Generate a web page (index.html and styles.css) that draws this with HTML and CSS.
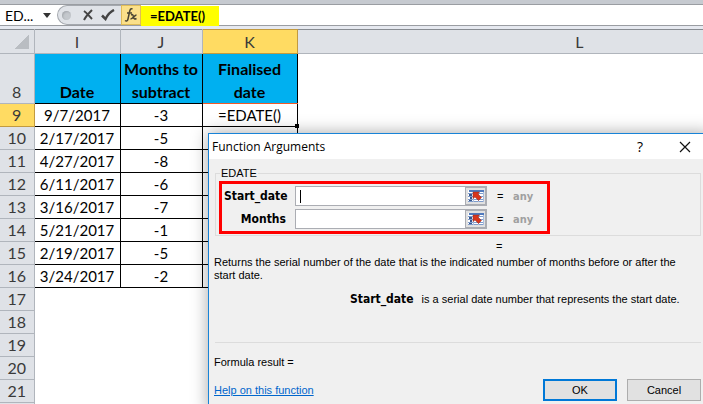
FILE: index.html
```html
<!DOCTYPE html>
<html lang="en">
<head>
    <meta charset="UTF-8">
    <meta name="viewport" content="width=device-width, initial-scale=1.0">
    <title>EDATE - Function Arguments</title>
    <link rel="stylesheet" href="styles.css">
</head>
<body>
    <div class="formula-bar">
        <div class="name-box">
            <span>ED...</span>
            <svg width="8" height="5" viewBox="0 0 8 5"><path d="M0 0h8L4 5z" fill="#333"/></svg>
        </div>
        <div class="tools">
            <span class="knob"></span>
            <button type="button" class="tool" aria-label="Cancel entry">
                <svg width="12" height="12" viewBox="0 0 12 12"><path d="M2 2c3 2 5 5 8 8M10 1C7 4 4 7 2 11" fill="none" stroke="#444" stroke-width="2"/></svg>
            </button>
            <button type="button" class="tool" aria-label="Enter">
                <svg width="14" height="12" viewBox="0 0 14 12"><path d="M1 6.500l3.500 3.500C6 7 9 3 13 1" fill="none" stroke="#444" stroke-width="2.500"/></svg>
            </button>
            <button type="button" class="tool fx" aria-label="Insert function">
                <svg width="14" height="16" viewBox="0 0 14 16" fill="none" stroke="#4a4433">
                    <path d="M8.500 2C6.500 1 6 2.500 5.500 5L4 12c-.4 2-1.500 2.500-3 1.500M3 6h5" stroke-width="1.500"/>
                    <path d="M7 8c2-1 2 0 2.500 2s1 2.500 3 1.500M12.500 8C10.500 8 9 12 6.500 12" stroke-width="1.500"/>
                </svg>
            </button>
        </div>
        <div class="formula"><span class="highlight">=EDATE()</span></div>
    </div>

    <table class="sheet">
        <colgroup>
            <col class="col-head">
            <col class="col-i">
            <col class="col-j">
            <col class="col-k">
            <col class="col-l">
        </colgroup>
        <thead>
            <tr>
                <th class="corner"></th>
                <th>I</th>
                <th>J</th>
                <th class="active">K</th>
                <th>L</th>
            </tr>
        </thead>
        <tbody>
            <tr class="titles">
                <th>8</th>
                <td>Date</td>
                <td>Months to subtract</td>
                <td class="above-edit">Finalised<br>date</td>
            </tr>
            <tr class="data"><th class="active">9</th><td>9/7/2017</td><td>-3</td><td class="editing">=EDATE()</td></tr>
            <tr class="data"><th>10</th><td>2/17/2017</td><td>-5</td><td></td></tr>
            <tr class="data"><th>11</th><td>4/27/2017</td><td>-8</td><td></td></tr>
            <tr class="data"><th>12</th><td>6/11/2017</td><td>-6</td><td></td></tr>
            <tr class="data"><th>13</th><td>3/16/2017</td><td>-7</td><td></td></tr>
            <tr class="data"><th>14</th><td>5/21/2017</td><td>-1</td><td></td></tr>
            <tr class="data"><th>15</th><td>2/19/2017</td><td>-5</td><td></td></tr>
            <tr class="data"><th>16</th><td>3/24/2017</td><td>-2</td><td></td></tr>
            <tr><th>17</th></tr>
            <tr><th>18</th></tr>
            <tr><th>19</th></tr>
            <tr><th>20</th></tr>
            <tr><th>21</th></tr>
            <tr><th></th></tr>
        </tbody>
    </table>

    <div class="dialog" role="dialog" aria-labelledby="dialogTitle">
        <div class="title-bar">
            <h2 id="dialogTitle">Function Arguments</h2>
            <button type="button" class="help-btn" aria-label="Help">?</button>
            <button type="button" class="close-btn" aria-label="Close">
                <svg width="12" height="12" viewBox="0 0 12 12"><path d="M1 1l10 10M11 1L1 11" stroke="#111" stroke-width="1.200"/></svg>
            </button>
        </div>
        <form class="dialog-body">
            <fieldset>
                <legend>EDATE</legend>
                <div class="args">
                    <div class="arg">
                        <label for="startDate">Start_date</label>
                        <div class="ref-box caret">
                            <input type="text" id="startDate" name="startDate">
                            <button type="button" aria-label="Select start date cell">
                                <svg width="16" height="14" viewBox="0 0 16 14"><use href="#refIcon"/></svg>
                            </button>
                        </div>
                        <span class="equals">=</span>
                        <span class="any">any</span>
                    </div>
                    <div class="arg">
                        <label for="months">Months</label>
                        <div class="ref-box">
                            <input type="text" id="months" name="months">
                            <button type="button" aria-label="Select months cell">
                                <svg width="16" height="14" viewBox="0 0 16 14"><use href="#refIcon"/></svg>
                            </button>
                        </div>
                        <span class="equals">=</span>
                        <span class="any">any</span>
                    </div>
                </div>
            </fieldset>
            <div class="result">=</div>
            <p class="description">Returns the serial number of the date that is the indicated number of months before or after the start date.</p>
            <p class="param"><b>Start_date</b><span>is a serial date number that represents the start date.</span></p>
            <hr>
            <p class="formula-result">Formula result =</p>
            <div class="footer">
                <a href="#">Help on this function</a>
                <button type="submit" class="btn default">OK</button>
                <button type="button" class="btn">Cancel</button>
            </div>
        </form>
    </div>

    <svg class="defs" width="0" height="0">
        <symbol id="refIcon" viewBox="0 0 16 14">
            <path d="M0 1h16v12H0z" fill="#ffffff"/>
            <path d="M1 1h15v2H1z" fill="#4f79bd"/>
            <path d="M0 4.500h16M0 7.500h16M0 10.500h16M0 12.500h16" stroke="#7f9ccb"/>
            <path d="M5.500 3v10M10.500 3v10M15.500 3v10" stroke="#a9bddd"/>
            <path d="M1 5h3v2H1zM2 8h2v2H2zM1 11h3v1H1z" fill="#35568f"/>
            <path d="M5 3h6.500L10 5l3.500 3.500-3 3L7 8 5 9.500z" fill="#d8341c" stroke="#8c2a20" stroke-width=".5"/>
        </symbol>
    </svg>
</body>
</html>
```
FILE: styles.css
```css
* {
    margin: 0;
    padding: 0;
    box-sizing: border-box;
}

body {
    position: relative;
    height: 100vh;
    overflow: hidden;
    background: #ffffff;
    color: #000000;
    font-family: Lato, 'Liberation Sans', sans-serif;
    font-size: 16px;
}

svg {
    display: block;
}

button {
    border: none;
    background: none;
    font: inherit;
    color: inherit;
}

.defs {
    position: absolute;
}

/* formula bar */

.formula-bar {
    display: flex;
    height: 29px;
    padding-top: 1px;
    border-top: 4px solid #c6cad0;
    border-bottom: 3px solid #e6e9f0;
    background: #ffffff;
    box-shadow: inset 0 -1px #9a9da2, inset 0 1px #9a9da2;
}

.name-box {
    display: flex;
    align-items: center;
    justify-content: space-between;
    width: 57px;
    height: 20px;
    padding: 0 6px 0 5px;
    font-size: 14px;
}

.tools {
    display: flex;
    align-items: center;
    width: 83px;
    height: 20px;
    border: 1px solid #a4a8ae;
    border-right: none;
    border-radius: 10px 0 0 10px;
    background: #e0e3e8;
}

.knob {
    width: 9px;
    height: 9px;
    margin: 0 7px 0 4px;
    border-radius: 50%;
    background: #c4c8cd;
    box-shadow: inset 1px 1px 2px #a5a9ae;
}

.tool {
    display: flex;
    align-items: center;
    justify-content: center;
    flex: 1;
    height: 18px;
}

.tools .fx {
    flex: none;
    width: 18px;
    margin-left: 4px;
    background: #fbe08a;
    box-shadow: 0 0 0 1px #e0bc58;
}

.formula {
    flex: 1;
}

.highlight {
    display: inline-block;
    height: 20px;
    margin-left: 1px;
    padding: 0 14px 0 9px;
    background: #ffff00;
    font-size: 13px;
    font-weight: bold;
    line-height: 20px;
}

/* worksheet */

.sheet {
    width: 862px;
    table-layout: fixed;
    border-collapse: collapse;
    line-height: 22px;
    text-align: center;
}

.col-head {
    width: 34px;
}

.col-i {
    width: 86px;
}

.col-j {
    width: 82px;
}

.col-k {
    width: 95px;
}

.sheet tr {
    height: 23px;
}

.sheet th {
    border: 1px solid #b0b5bc;
    border-left: none;
    background: #dfe2e7;
    color: #3a3a3a;
    font-weight: normal;
}

.sheet thead tr {
    height: 24px;
}

.sheet thead th {
    border-top-color: #878c92;
}

.sheet .corner {
    padding: 5px 5px 4px 14px;
    background: linear-gradient(135deg, transparent 50%, #b9bdc2 50%) content-box, #dfe2e7;
}

.sheet .active {
    border-color: #c29a40;
    background: #ffdb62;
}

.sheet tbody .titles {
    height: 50px;
}

.titles th,
.titles td {
    vertical-align: bottom;
}

.titles td {
    border: 1px solid #000000;
    background: #00b0f0;
    font-weight: bold;
    line-height: 23px;
}

.titles .above-edit {
    border-bottom-color: #f05a28;
}

.data td {
    border: 1px solid #000000;
    font-size: 15px;
}

.sheet .editing {
    position: relative;
    border-top-color: #f05a28;
}

.editing::after {
    content: '';
    position: absolute;
    right: -2px;
    bottom: -2px;
    width: 4px;
    height: 4px;
    background: #000000;
}

/* dialog */

.dialog {
    position: absolute;
    top: 133px;
    right: -8px;
    bottom: -8px;
    left: 208px;
    border: 1px solid #1883d7;
    background: #f0f0f0;
    box-shadow: 0 0 16px rgba(0, 0, 0, 0.35);
    font-family: 'Liberation Sans', Arial, sans-serif;
    font-size: 11px;
    line-height: 13px;
}

.title-bar {
    display: flex;
    align-items: center;
    height: 25px;
    padding: 0 19px 0 3px;
    background: #ffffff;
    font-family: 'Open Sans', 'Noto Sans', sans-serif;
}

.title-bar h2 {
    flex: 1;
    font-size: 12px;
    font-weight: normal;
}

.help-btn {
    width: 12px;
    margin-right: 33px;
    font-size: 14px;
}

.dialog-body {
    padding: 8px 9px 0 5px;
}

fieldset {
    margin-left: 1px;
    padding: 1px 3px;
    border: 1px solid #dcdcdc;
}

legend {
    margin-left: 1px;
    padding: 0 1px;
}

.args {
    display: flex;
    flex-direction: column;
    gap: 3px;
    width: 331px;
    padding: 2px;
    border: 3px solid #ff0000;
}

.arg {
    display: flex;
    align-items: center;
}

.arg label {
    width: 62px;
    margin-right: 9px;
    font-family: 'DejaVu Sans Condensed', 'DejaVu Sans', sans-serif;
    font-size: 12px;
    font-weight: bold;
    text-align: right;
}

.ref-box {
    position: relative;
    display: flex;
    width: 192px;
    height: 20px;
    border: 1px solid #abadb3;
    background: #ffffff;
}

.ref-box input {
    flex: 1;
    min-width: 0;
    padding: 0 4px;
    border: none;
    outline: none;
    background: none;
    font: inherit;
}

.ref-box button {
    display: flex;
    align-items: center;
    justify-content: center;
    width: 21px;
    border: 1px solid #abadb3;
    background: #e1e1e1;
}

.caret::before {
    content: '';
    position: absolute;
    top: 3px;
    left: 4px;
    width: 1px;
    height: 13px;
    background: #000000;
}

.equals {
    width: 7px;
    margin: 0 9px 0 10px;
}

.any {
    color: #a0a0a0;
    font-family: 'DejaVu Sans Condensed', 'DejaVu Sans', sans-serif;
    font-weight: bold;
}

.result {
    margin: 4px 0 3px 282px;
}

.description {
    padding-right: 16px;
}

.param {
    display: flex;
    gap: 8px;
    margin: 11px 0 36px 136px;
    white-space: nowrap;
}

.param b {
    font-family: 'DejaVu Sans Condensed', 'DejaVu Sans', sans-serif;
    font-size: 12px;
}

hr {
    margin-left: 1px;
    border: none;
    border-top: 1px solid #dcdcdc;
}

.formula-result {
    margin: 13px 0 10px;
}

.footer {
    display: flex;
    align-items: center;
    gap: 10px;
}

.footer a {
    margin-right: auto;
    color: #0066cc;
}

.btn {
    width: 74px;
    height: 22px;
    border: 1px solid #adadad;
    background: #e1e1e1;
}

.default {
    border: 2px solid #0078d7;
}
```
